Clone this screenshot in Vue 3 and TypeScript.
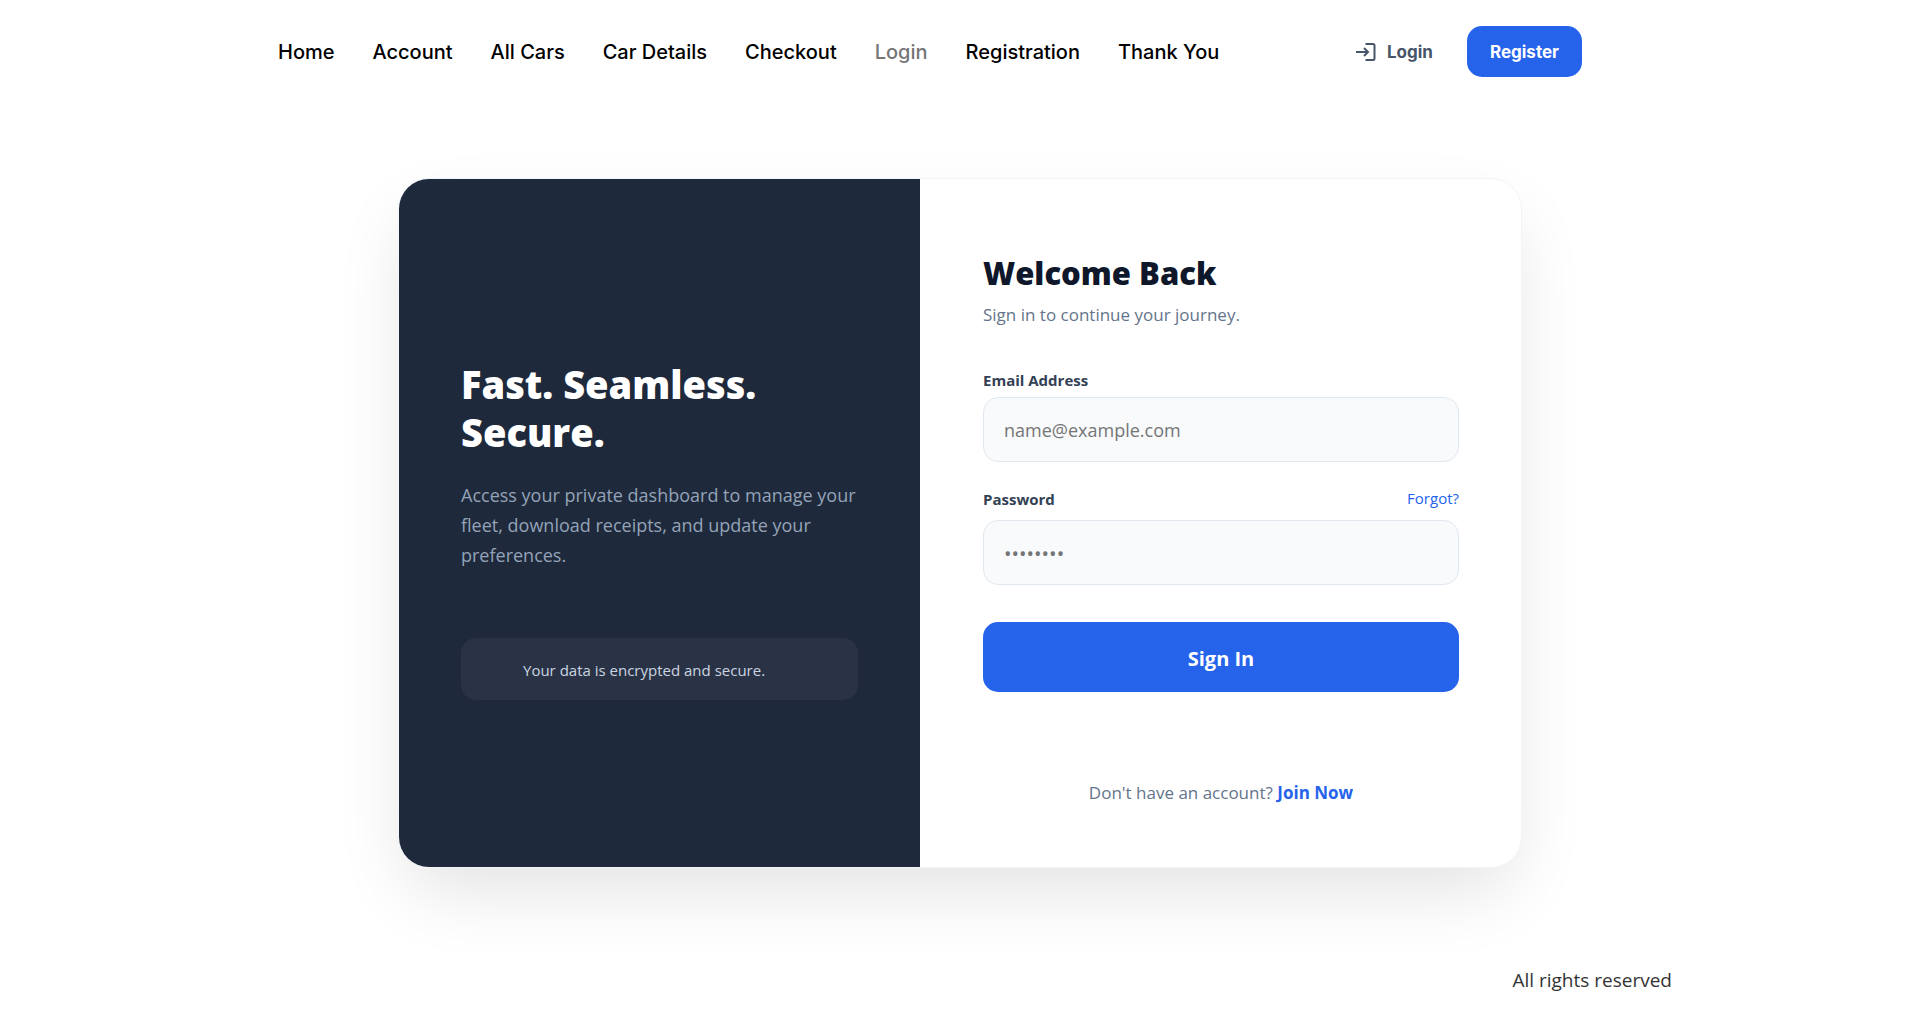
<script setup lang="ts">
import { ref } from 'vue'

interface NavItem {
  label: string
  active?: boolean
}

const navItems: NavItem[] = [
  { label: 'Home' },
  { label: 'Account' },
  { label: 'All Cars' },
  { label: 'Car Details' },
  { label: 'Checkout' },
  { label: 'Login', active: true },
  { label: 'Registration' },
  { label: 'Thank You' },
]

const email = ref('')
const password = ref('')
</script>

<template>
  <div class="page">
    <header class="header container">
      <nav class="nav">
        <a
          v-for="item in navItems"
          :key="item.label"
          href="#"
          class="nav-link"
          :class="{ active: item.active }"
        >{{ item.label }}</a>
      </nav>
      <div class="actions">
        <a href="#" class="login-link">
          <svg class="login-icon" viewBox="0 0 20 20" fill="none" stroke="currentColor" stroke-width="2" aria-hidden="true">
            <path d="M0 10H12M8 6l4 4-4 4M9.500 2H17a1.500 1.500 0 0 1 1.500 1.500v13A1.500 1.500 0 0 1 17 18H9.500" />
          </svg>
          Login
        </a>
        <button type="button" class="register">Register</button>
      </div>
    </header>

    <main class="main">
      <section class="card">
        <div class="panel intro">
          <h2 class="intro-title">Fast. Seamless. Secure.</h2>
          <p class="intro-text">Access your private dashboard to manage your fleet, download receipts, and update your preferences.</p>
          <div class="notice">Your data is encrypted and secure.</div>
        </div>

        <div class="panel sign-in">
          <h1 class="title">Welcome Back</h1>
          <p class="subtitle">Sign in to continue your journey.</p>
          <form @submit.prevent>
            <label class="label" for="email">Email Address</label>
            <input id="email" v-model="email" class="field" type="email" placeholder="name@example.com" />
            <div class="label-row">
              <label class="label" for="password">Password</label>
              <a href="#" class="forgot">Forgot?</a>
            </div>
            <input id="password" v-model="password" class="field password" type="password" placeholder="••••••••" />
            <button type="submit" class="submit">Sign In</button>
          </form>
          <p class="join">Don't have an account? <a href="#">Join Now</a></p>
        </div>
      </section>
    </main>

    <footer class="footer container">All rights reserved</footer>
  </div>
</template>

<style>
body {
  margin: 0;
  background: #fff;
}
</style>

<style scoped>
.page {
  font-family: 'Open Sans', 'Noto Sans', sans-serif;
  color: #333;
}

.page *,
.page {
  box-sizing: border-box;
}

a {
  text-decoration: none;
}

h1,
h2,
p {
  margin: 0;
}

.container {
  max-width: 1424px;
  margin: 0 auto;
}

.header {
  display: flex;
  align-items: center;
  justify-content: space-between;
  padding: 26px 90px 25px 30px;
  font-family: Inter, sans-serif;
}

.nav {
  display: flex;
  gap: 38px;
}

.nav-link {
  font-size: 20px;
  line-height: 28px;
  font-weight: 500;
  color: #000;
  white-space: nowrap;
}

.nav-link.active {
  color: #757575;
}

.actions {
  display: flex;
  align-items: center;
  gap: 34px;
  font-size: 17px;
}

.login-link {
  display: flex;
  align-items: center;
  gap: 11px;
  font-weight: 700;
  color: #475569;
}

.login-icon {
  width: 20px;
  height: 20px;
}

.register {
  height: 51px;
  padding: 0 23px;
  border: 0;
  border-radius: 15px;
  background: #2563eb;
  color: #fff;
  font: 700 17px Inter, sans-serif;
}

.main {
  display: flex;
  justify-content: center;
  padding: 76px 24px 97px;
}

.card {
  display: grid;
  grid-template-columns: 521fr 601fr;
  width: 100%;
  max-width: 1124px;
  border: 1px solid #f1f5f9;
  border-radius: 31px;
  background: #fff;
  overflow: hidden;
  box-shadow: 0 31px 75px -12px rgba(0, 0, 0, 0.12);
}

.panel {
  padding: 73px 62px 60px;
}

.intro {
  display: flex;
  flex-direction: column;
  justify-content: center;
  background: #1e293b;
}

.sign-in {
  padding-left: 63px;
}

.intro-title {
  font-size: 38px;
  line-height: 48px;
  font-weight: 800;
  color: #fff;
}

.intro-text {
  margin-top: 24px;
  font-size: 18px;
  line-height: 30px;
  color: #94a3b8;
}

.notice {
  margin-top: 68px;
  padding: 21px 62px 19px;
  border-radius: 15px;
  background: #2a3345;
  font-size: 15px;
  line-height: 22px;
  color: #cbd5e1;
}

.title {
  font-size: 31px;
  line-height: 42px;
  font-weight: 800;
  color: #0f172a;
}

.subtitle {
  margin: 7px 0 40px;
  font-size: 17px;
  line-height: 28px;
  color: #64748b;
}

.label {
  display: block;
  font-size: 15px;
  line-height: 22px;
  font-weight: 700;
  color: #334155;
}

.label-row {
  display: flex;
  justify-content: space-between;
  margin: 26px 0 10px;
}

.forgot {
  font-size: 15px;
  line-height: 20px;
  color: #2563eb;
}

.field {
  display: block;
  width: 100%;
  height: 65px;
  padding: 0 20px;
  border: 1px solid #e2e8f0;
  border-radius: 15px;
  background: #f8fafc;
  font: 400 18px 'Open Sans', 'Noto Sans', sans-serif;
  color: #0f172a;
}

.label + .field {
  margin-top: 6px;
}

.field::placeholder {
  color: #757575;
}

.field.password {
  padding-top: 2px;
  font-size: 20px;
}

.submit {
  display: block;
  width: 100%;
  height: 70px;
  margin-top: 37px;
  padding: 3px 0 0;
  border: 0;
  border-radius: 15px;
  background: #2563eb;
  color: #fff;
  font: 700 20px 'Open Sans', 'Noto Sans', sans-serif;
}

.join {
  margin-top: 87px;
  text-align: center;
  font-size: 17px;
  line-height: 28px;
  color: #64748b;
}

.join a {
  font-weight: 700;
  color: #2563eb;
}

.footer {
  padding-bottom: 17px;
  text-align: right;
  font-size: 19px;
  line-height: 30px;
}
</style>
